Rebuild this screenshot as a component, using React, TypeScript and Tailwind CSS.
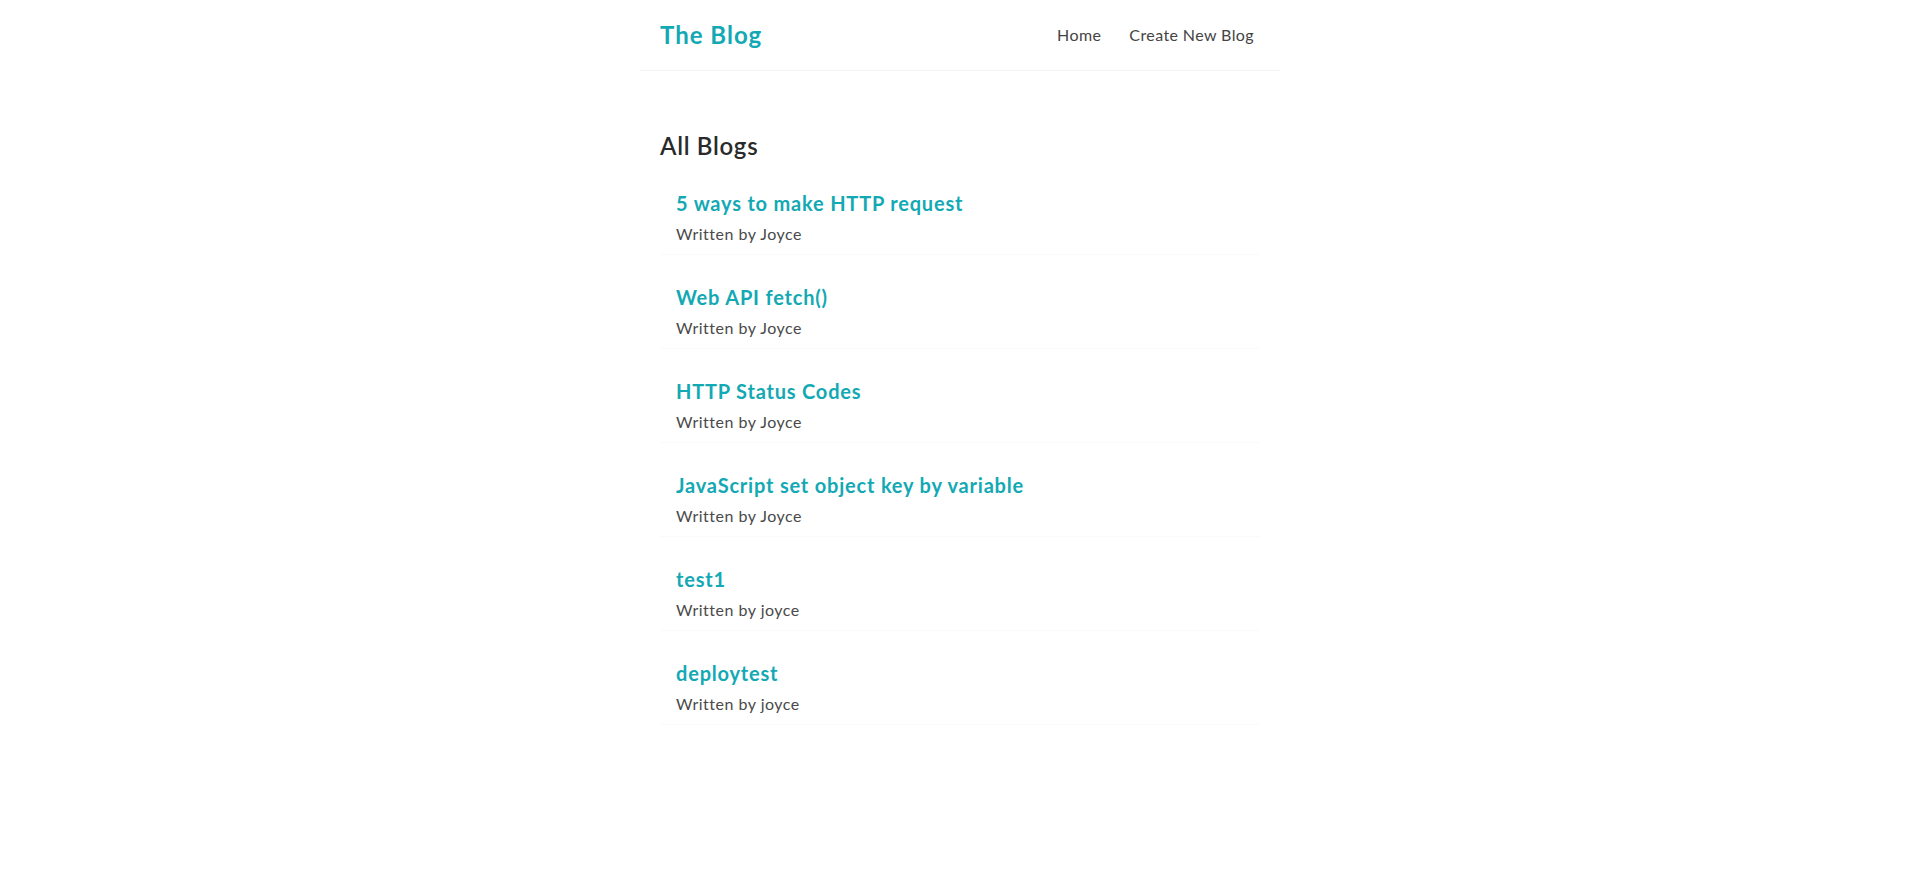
const blogs = [
  { id: 1, title: "5 ways to make HTTP request", author: "Joyce" },
  { id: 2, title: "Web API fetch()", author: "Joyce" },
  { id: 3, title: "HTTP Status Codes", author: "Joyce" },
  { id: 4, title: "JavaScript set object key by variable", author: "Joyce" },
  { id: 5, title: "test1", author: "joyce" },
  { id: 6, title: "deploytest", author: "joyce" },
];

function Navbar() {
  return (
    <nav className="mx-auto flex w-[640px] items-center border-b border-[#f2f2f2] p-5">
      <h1 className="text-[24px] font-bold leading-[30px] tracking-[1px] text-[#13a9b4]">
        The Blog
      </h1>
      <div className="ml-auto text-base leading-5 tracking-[0.4px]">
        <a href="#" className="ml-4 p-1.5 text-[#444]">
          Home
        </a>
        <a href="#" className="ml-4 p-1.5 text-[#444]">
          Create New Blog
        </a>
      </div>
    </nav>
  );
}

export default function App() {
  return (
    <div className="min-h-screen bg-white font-['Lato',sans-serif] text-[#333]">
      <Navbar />
      <div className="mx-auto my-10 w-[640px] p-5">
        <h2 className="text-[24px] font-semibold leading-[30px] tracking-[0.7px] text-[#2a2a2a]">
          All Blogs
        </h2>
        <div className="flex flex-col gap-5 pt-5">
          {blogs.map((blog) => (
            <div key={blog.id} className="border-b border-[#fafafa] px-4 py-2.5">
              <h2 className="mb-2 text-[20px] font-bold leading-[25px] tracking-[0.8px] text-[#13a9b4]">
                {blog.title}
              </h2>
              <p className="text-base leading-5 tracking-[0.5px] text-[#4a4a4a]">
                Written by {blog.author}
              </p>
            </div>
          ))}
        </div>
      </div>
    </div>
  );
}
